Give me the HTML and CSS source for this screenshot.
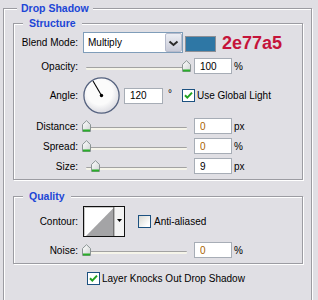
FILE: index.html
```html
<!DOCTYPE html>
<html lang="en">

<head>
    <meta charset="UTF-8">
    <meta name="viewport" content="width=device-width, initial-scale=1.0">
    <title>Drop Shadow</title>
    <link rel="stylesheet" href="styles.css">
</head>

<body>
    <!-- shared shapes -->
    <svg class="defs" width="0" height="0">
        <defs>
            <linearGradient id="thumbfill" x1="0" y1="0" x2="1" y2="1">
                <stop offset="0" stop-color="#ffffff" />
                <stop offset="1" stop-color="#cfd3d3" />
            </linearGradient>
            <radialGradient id="dialfill" cx="0.45" cy="0.4" r="0.6">
                <stop offset="0.6" stop-color="#fbfbfb" />
                <stop offset="1" stop-color="#dcdce2" />
            </radialGradient>
            <symbol id="thumb" viewBox="0 0 9 12">
                <path d="M0.5 11.5 V4.5 L4.5 0.7 L8.5 4.5 V11.5 Z" fill="url(#thumbfill)" stroke="#8b9494" />
                <rect x="1" y="9.5" width="7" height="2" fill="#2aad2a" />
            </symbol>
            <symbol id="tick" viewBox="0 0 11 11">
                <path d="M2 5.2 L4.3 7.6 L9 2.6" fill="none" stroke="#21a121" stroke-width="2" />
            </symbol>
        </defs>
    </svg>

    <fieldset class="group outer">
        <legend>Drop Shadow</legend>

        <fieldset class="group structure">
            <legend>Structure</legend>

            <div class="row blend-row">
                <span class="lbl">Blend Mode:</span>
                <div class="combo">
                    <span class="combo-text">Multiply</span>
                    <span class="combo-btn">
                        <svg width="15" height="17" viewBox="0 0 15 17">
                            <polyline points="3.5,7.5 7.5,11 11.5,7.5" fill="none" stroke="#2b2b2b" stroke-width="2" />
                        </svg>
                    </span>
                </div>
                <span class="swatch"></span>
                <span class="hex">2e77a5</span>
            </div>

            <div class="row field-row">
                <span class="lbl">Opacity:</span>
                <div class="slider">
                    <div class="track"></div>
                    <svg class="thumb" style="left:99px"><use href="#thumb" /></svg>
                </div>
                <input class="num" type="text" value="100">
                <span class="unit">%</span>
            </div>

            <div class="row angle-row">
                <span class="lbl">Angle:</span>
                <svg class="dial" width="37" height="37" viewBox="0 0 37 37">
                    <circle cx="18.5" cy="18.5" r="17.6" fill="url(#dialfill)" stroke="#55627f" stroke-width="1.3" />
                    <line x1="18.5" y1="18.5" x2="10" y2="4" stroke="#000" stroke-width="1.1" />
                    <circle cx="18.5" cy="18.5" r="1.7" fill="#000" />
                </svg>
                <input class="num angle" type="text" value="120">
                <span class="deg">°</span>
                <span class="check on global"><svg width="11" height="11"><use href="#tick" /></svg></span>
                <span class="check-text">Use Global Light</span>
            </div>

            <div class="row field-row">
                <span class="lbl">Distance:</span>
                <div class="slider">
                    <div class="track"></div>
                    <svg class="thumb" style="left:-1px"><use href="#thumb" /></svg>
                </div>
                <input class="num zero" type="text" value="0">
                <span class="unit">px</span>
            </div>

            <div class="row field-row">
                <span class="lbl">Spread:</span>
                <div class="slider">
                    <div class="track"></div>
                    <svg class="thumb" style="left:-1px"><use href="#thumb" /></svg>
                </div>
                <input class="num zero" type="text" value="0">
                <span class="unit">%</span>
            </div>

            <div class="row field-row">
                <span class="lbl">Size:</span>
                <div class="slider">
                    <div class="track"></div>
                    <svg class="thumb" style="left:8px"><use href="#thumb" /></svg>
                </div>
                <input class="num" type="text" value="9">
                <span class="unit">px</span>
            </div>
        </fieldset>

        <fieldset class="group quality">
            <legend>Quality</legend>

            <div class="row contour-row">
                <span class="lbl">Contour:</span>
                <svg class="contour" width="42" height="31" viewBox="0 0 42 31">
                    <rect x="0.5" y="0.5" width="41" height="30" fill="#fff" stroke="#111" />
                    <path d="M1.5 29.5 V1.5 H30.5" fill="none" stroke="#c9c9c9" />
                    <polygon points="3,30 30.5,2 30.5,30" fill="#a4a4a6" />
                    <line x1="31" y1="0.5" x2="31" y2="30.5" stroke="#111" />
                    <rect x="31.5" y="1" width="9.5" height="29" fill="#f3f3f3" />
                    <polygon points="34,13 39,13 36.5,16" fill="#000" />
                </svg>
                <span class="check anti"></span>
                <span class="check-text">Anti-aliased</span>
            </div>

            <div class="row field-row noise-row">
                <span class="lbl">Noise:</span>
                <div class="slider">
                    <div class="track"></div>
                    <svg class="thumb" style="left:-1px"><use href="#thumb" /></svg>
                </div>
                <input class="num zero" type="text" value="0">
                <span class="unit">%</span>
            </div>
        </fieldset>

        <div class="row knock-row">
            <span class="check on"><svg width="11" height="11"><use href="#tick" /></svg></span>
            <span class="check-text">Layer Knocks Out Drop Shadow</span>
        </div>
    </fieldset>
</body>

</html>
```

FILE: styles.css
```css
body {
    margin: 0;
    width: 318px;
    height: 300px;
    overflow: hidden;
    background-color: #e0dfe4;
    font-family: 'Liberation Sans', Arial, sans-serif;
    font-size: 10px;
    color: #000;
}

.defs {
    position: absolute;
}

/* etched group boxes */
.group {
    margin: 0;
    min-width: 0;
    border: 1px solid #9c9ca2;
    box-shadow: 1px 1px 0 #fff, inset 1px 1px 0 #fff;
}

.group legend {
    font-size: 10.5px;
    font-weight: bold;
    line-height: 13px;
    color: #1c46d6;
    background-color: #e0dfe4;
}

.outer {
    margin: 2px 6px 0 3px;
    padding: 2px 8px 17px 9px;
}

.outer > legend {
    margin-left: 4px;
    padding: 0 4px;
}

.structure,
.quality {
    padding: 2px 0 5px 0;
}

.structure > legend,
.quality > legend {
    margin-left: 9px;
    padding: 0 6px;
}

.quality {
    margin-top: 10px;
    padding-top: 3px;
}

/* rows */
.row {
    display: flex;
    align-items: center;
}

.lbl {
    flex: none;
    width: 64px;
    margin-right: 5px;
    text-align: right;
}

.blend-row {
    height: 21px;
}

.field-row {
    height: 16px;
    margin-top: 4px;
}

.structure .field-row:nth-of-type(2) {
    margin-top: 5px;
}

.angle-row {
    height: 37px;
    margin-top: 3px;
}

.contour-row {
    height: 31px;
}

.noise-row {
    margin-top: 5px;
}

.knock-row {
    height: 13px;
    margin-top: 8px;
    padding-left: 74px;
}

/* blend mode combo */
.combo {
    flex: none;
    display: flex;
    width: 100px;
    height: 21px;
    box-sizing: border-box;
    border: 1px solid #7f9db9;
    background: #fff;
}

.combo-text {
    flex: 1;
    padding-left: 4px;
    line-height: 19px;
}

.combo-btn {
    width: 17px;
    height: 19px;
    box-sizing: border-box;
    border: 1px solid #b6bbcc;
    border-radius: 2px;
    background: linear-gradient(#eceef4, #c9cbd8);
}

.combo-btn svg {
    display: block;
}

.swatch {
    width: 31px;
    height: 16px;
    margin: 3px 0 0 2px;
    box-sizing: border-box;
    border: 1px solid #8d8f96;
    background-color: #2e77a5;
}

.hex {
    margin-left: 6px;
    font-size: 18px;
    font-weight: bold;
    line-height: 1;
    color: #c5143a;
}

/* sliders */
.slider {
    position: relative;
    flex: none;
    width: 111px;
    height: 16px;
}

.track {
    position: absolute;
    left: 3px;
    top: 9px;
    width: 101px;
    height: 3px;
    box-sizing: border-box;
    border-top: 1px solid #a2a2a2;
    border-radius: 1px;
    background-color: #f5f4e9;
}

.thumb {
    position: absolute;
    top: 2px;
    width: 9px;
    height: 12px;
}

/* number fields */
.num {
    flex: none;
    width: 38px;
    height: 16px;
    box-sizing: border-box;
    margin: 0;
    padding: 0 0 0 5px;
    border: 1px solid #a7adb6;
    background: #fff;
    font-family: 'Liberation Sans', Arial, sans-serif;
    font-size: 10px;
    color: #000;
    outline: none;
}

.num.zero {
    color: #a86400;
}

.num.angle {
    width: 39px;
    margin-left: 4px;
}

.unit {
    margin-left: 2px;
}

.deg {
    margin: 0 0 4px 5px;
}

/* checkboxes */
.check {
    flex: none;
    display: flex;
    align-items: center;
    justify-content: center;
    width: 13px;
    height: 13px;
    box-sizing: border-box;
    border: 1px solid #1c5180;
    background: linear-gradient(135deg, #d8d8d2, #ffffff 80%);
}

.check.on {
    background: #fff;
}

.check.global {
    margin-left: 10px;
}

.check.anti {
    margin-left: 13px;
}

.check-text {
    margin-left: 2px;
}

.anti + .check-text {
    margin-left: 3px;
}

.contour {
    display: block;
}
```
